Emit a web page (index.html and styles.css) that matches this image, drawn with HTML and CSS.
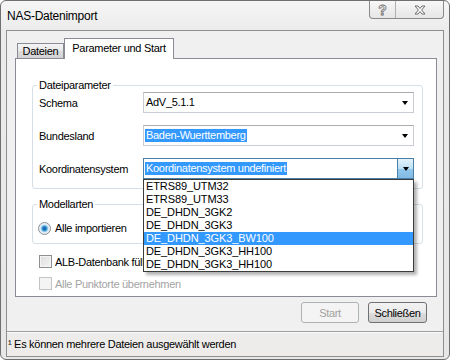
FILE: index.html
```html
<!DOCTYPE html>
<html lang="de">
<head>
<meta charset="utf-8">
<title>NAS-Datenimport</title>
<link rel="stylesheet" href="styles.css">
</head>
<body>
<div class="window">
  <div class="titlebar">
    <span class="title">NAS-Datenimport</span>
    <div class="caption">
      <span class="cap-btn help">?</span>
      <span class="cap-btn close">
        <svg width="12" height="10" viewBox="-1 -1 12 10"><polygon points="0,0 3,0 5,2.5 7,0 10,0 6.6,4 10,8 7,8 5,5.5 3,8 0,8 3.4,4" fill="#fff" stroke="#6b6b6b" stroke-width="1" stroke-linejoin="round"/></svg>
      </span>
    </div>
  </div>
  <div class="client">
    <div class="tabs">
      <div class="tab">Dateien</div>
      <div class="tab active">Parameter und Start</div>
    </div>
    <div class="panel">
      <fieldset class="group params">
        <legend>Dateiparameter</legend>
        <div class="form">
          <span class="label">Schema</span>
          <div class="combo"><span class="val">AdV_5.1.1</span><span class="arrow"></span></div>
          <span class="label">Bundesland</span>
          <div class="combo"><span class="val sel">Baden-Wuerttemberg</span><span class="arrow"></span></div>
          <span class="label">Koordinatensystem</span>
          <div class="combo focus"><span class="val sel">Koordinatensystem undefiniert</span><span class="arrow"></span>
            <ul class="list">
              <li>ETRS89_UTM32</li>
              <li>ETRS89_UTM33</li>
              <li>DE_DHDN_3GK2</li>
              <li>DE_DHDN_3GK3</li>
              <li class="hi">DE_DHDN_3GK3_BW100</li>
              <li>DE_DHDN_3GK3_HH100</li>
              <li>DE_DHDN_3GK3_HH100</li>
            </ul>
          </div>
        </div>
      </fieldset>
      <fieldset class="group modes">
        <legend>Modellarten</legend>
        <div class="radio-row"><span class="radio"></span><span>Alle importieren</span></div>
      </fieldset>
      <div class="check-row first"><span class="check"></span><span>ALB-Datenbank füllen</span></div>
      <div class="check-row disabled"><span class="check"></span><span>Alle Punktorte übernehmen</span></div>
    </div>
    <div class="buttons">
      <button class="btn start" disabled>Start</button>
      <button class="btn close-btn">Schließen</button>
    </div>
    <div class="status">¹ Es können mehrere Dateien ausgewählt werden</div>
  </div>
</div>
</body>
</html>
```
FILE: styles.css
```css
* { box-sizing: border-box; }
html, body { margin: 0; padding: 0; background: #fff; }
body {
  font-family: "Liberation Sans", Arial, sans-serif;
  font-size: 11px;
  color: #000;
  letter-spacing: -0.3px;
}
.window {
  width: 450px;
  height: 360px;
  border: 1px solid #6f6f6f;
  border-radius: 6px;
  background: linear-gradient(#f6f6f6, #ebebeb 30px, #e7e7e7);
  display: flex;
  flex-direction: column;
}
.titlebar {
  height: 29px;
  display: flex;
  align-items: flex-start;
  flex: none;
}
.title {
  font-size: 12px;
  line-height: 14px;
  margin: 8px 0 0 6px;
  letter-spacing: -0.25px;
}
.caption {
  margin-left: auto;
  margin-right: 5px;
  height: 18px;
  display: flex;
  border: 1px solid #8a8a8a;
  border-top: none;
  border-radius: 0 0 4px 4px;
  background: linear-gradient(#f7f7f7, #e6e6e6);
}
.cap-btn {
  display: flex;
  align-items: center;
  justify-content: center;
}
.help {
  width: 26px;
  border-right: 1px solid #b0b0b0;
  font-size: 14px;
  font-weight: bold;
  color: #fff;
  -webkit-text-stroke: 0.8px #6b6b6b;
  letter-spacing: 0;
}
.close { width: 47px; }
.client {
  flex: 1;
  margin: 0 5px 2px 5px;
  border: 1px solid #8f8f8f;
  background: #f0f0f0;
  display: flex;
  flex-direction: column;
}
.tabs {
  height: 27px;
  display: flex;
  align-items: flex-end;
  padding-left: 10px;
  flex: none;
}
.tab {
  height: 15px;
  width: 47px;
  border: 1px solid #898c95;
  border-bottom: none;
  background: linear-gradient(#f4f4f4, #e8e8e8 50%, #dcdcdc 51%, #d3d3d3);
  text-align: center;
  line-height: 14px;
}
.tab.active {
  height: 21px;
  width: 110px;
  background: #fff;
  margin-bottom: -1px;
  position: relative;
  z-index: 1;
  line-height: 19px;
}
.panel {
  height: 239px;
  margin: 0 6px 0 8px;
  border: 1px solid #898c95;
  background: #fff;
  padding-left: 16px;
  flex: none;
}
.group {
  width: 391px;
  margin: 0;
  border: 1px solid #d5dfe5;
  border-radius: 3px;
  min-width: 0;
}
.group legend {
  padding: 0 2px;
  margin-left: -2px;
  line-height: 14px;
}
.params {
  margin-top: 19px;
  padding: 0 8px 9px 6px;
}
.form {
  display: grid;
  grid-template-columns: 104px 271px;
  row-gap: 12px;
  align-items: center;
}
.combo {
  position: relative;
  height: 21px;
  border: 1px solid #c8ccd3;
  border-top-color: #abadb3;
  background: #fff;
  display: flex;
  align-items: center;
  padding-left: 1px;
}
.val {
  line-height: 13px;
  padding: 0 1px;
  white-space: nowrap;
}
.val.sel {
  background: #3399ff;
  color: #fff;
}
.arrow {
  margin-left: auto;
  width: 16px;
  align-self: stretch;
  display: flex;
  align-items: center;
  justify-content: center;
}
.arrow::before {
  content: "";
  border-left: 3.5px solid transparent;
  border-right: 3.5px solid transparent;
  border-top: 4px solid #000;
  margin-top: 1px;
}
.combo.focus {
  border-color: #4a7fa8;
}
.combo.focus .arrow {
  border-left: 1px solid #4a7fa8;
  background: linear-gradient(#e4f2fb, #bfe0f5 50%, #95c9ec 51%, #80bae4);
}
.list {
  position: absolute;
  top: 20px;
  left: -1px;
  width: 271px;
  margin: 0;
  padding: 0;
  list-style: none;
  border: 1px solid #3c3c3c;
  background: #fff;
  z-index: 10;
  box-shadow: 3px 3px 3px rgba(0, 0, 0, 0.3);
  letter-spacing: -0.1px;
}
.list li {
  height: 13px;
  line-height: 13px;
  padding-left: 2px;
  white-space: nowrap;
}
.list li.hi {
  background: #3399ff;
  color: #fff;
}
.modes {
  margin-top: 8px;
  padding: 10px 8px 8px 6px;
}
.radio-row {
  display: flex;
  align-items: center;
  height: 14px;
  gap: 4px;
  margin-left: -1px;
}
.radio {
  width: 13px;
  height: 13px;
  border-radius: 50%;
  border: 1px solid #8a8f94;
  background: radial-gradient(circle, #0f5d99 0, #2b86c9 2px, #7fc0ec 3px, #dbe9f3 4px, #f3f3f3 6px);
}
.check-row {
  display: flex;
  align-items: center;
  height: 13px;
  gap: 3px;
  margin-left: 7px;
  margin-top: 9px;
}
.check-row.first { margin-top: 11px; }
.check {
  width: 13px;
  height: 13px;
  border: 1px solid #8e8f8f;
  background: linear-gradient(135deg, #dcdcdc, #f6f6f6);
  box-shadow: inset 0 0 0 1px #f4f4f4;
}
.check-row.disabled { color: #a3a3a3; }
.check-row.disabled .check {
  border-color: #c4c4c4;
  background: #f4f4f4;
}
.buttons {
  display: flex;
  justify-content: flex-end;
  gap: 9px;
  padding: 5px 16px 0 0;
  flex: none;
}
.btn {
  font: inherit;
  letter-spacing: -0.3px;
  height: 21px;
  padding: 0;
  border: 1px solid #707070;
  border-radius: 3px;
  background: linear-gradient(#f2f2f2, #ebebeb 50%, #dddddd 51%, #cfcfcf);
  color: #000;
}
.btn.start {
  width: 58px;
  border-color: #adb2b5;
  background: #f4f4f4;
  color: #a3a3a3;
}
.btn.close-btn { width: 59px; }
.status {
  flex: 1;
  margin-top: 8px;
  border-top: 1px solid #9f9f9f;
  box-shadow: inset 0 1px 0 #fafafa;
  background: #eeeceb;
  display: flex;
  align-items: center;
  padding-left: 1px;
}
```
